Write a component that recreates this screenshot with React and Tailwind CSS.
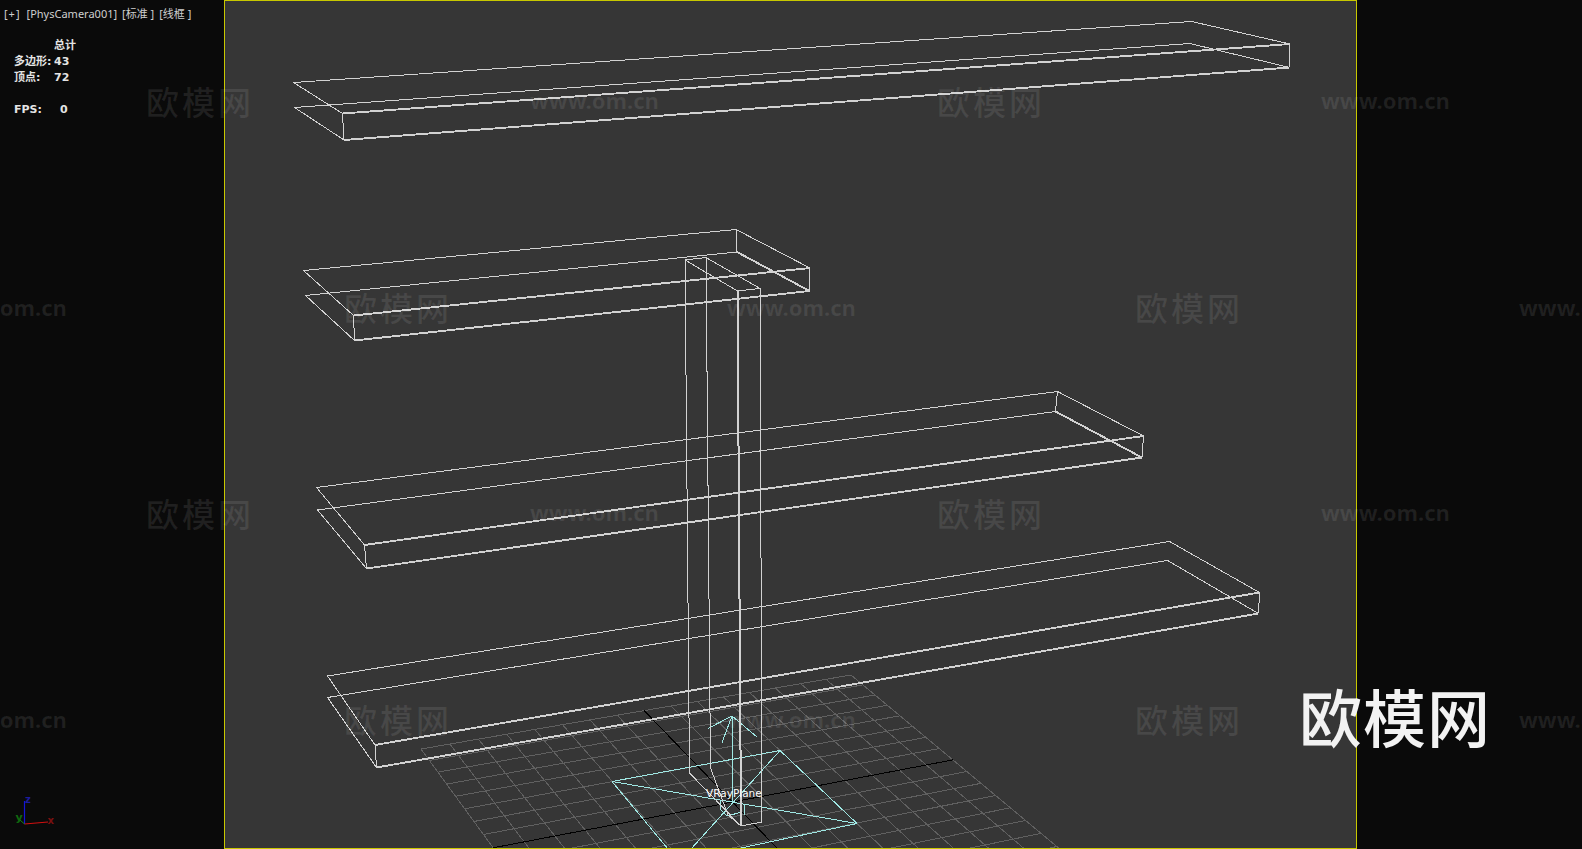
const shelves = [
  { bl: [293.5, 82.5], blb: [294.5, 107.5], fl: [342.5, 113.5], flb: [344, 140], br: [1191.5, 21.5], brb: [1190, 43.5], fr: [1290, 44], frb: [1289.5, 67.5] },
  { bl: [303.5, 270.5], blb: [305.5, 295.5], fl: [353.5, 315.5], flb: [354.5, 340.5], br: [736, 229.5], brb: [737, 252], fr: [810, 268], frb: [809.5, 291], backPost: true },
  { bl: [316.5, 487.5], blb: [317.5, 510], fl: [364.5, 545], flb: [366.5, 568.5], br: [1057.5, 391.5], brb: [1055.5, 411.5], fr: [1143.5, 436], frb: [1142, 457.5], backPost: true },
  { bl: [327.5, 676], blb: [327.5, 697.5], fl: [375, 745], flb: [376.5, 767.5], br: [1169.5, 541.5], brb: [1167.5, 560.5], fr: [1259.5, 592.5], frb: [1258.5, 613.5] },
]

const watermarks = [
  { text: '欧模网', cls: 'left-[146px] top-[86px] text-[33px] font-medium tracking-[3px]' },
  { text: 'www.om.cn', cls: 'left-[530px] top-[89px] text-[22px] font-bold' },
  { text: '欧模网', cls: 'left-[937px] top-[86px] text-[33px] font-medium tracking-[3px]' },
  { text: 'www.om.cn', cls: 'left-[1321px] top-[89px] text-[22px] font-bold' },
  { text: 'www.om.cn', cls: 'left-[-62px] top-[296px] text-[22px] font-bold' },
  { text: '欧模网', cls: 'left-[344px] top-[292px] text-[33px] font-medium tracking-[3px]' },
  { text: 'www.om.cn', cls: 'left-[727px] top-[296px] text-[22px] font-bold' },
  { text: '欧模网', cls: 'left-[1135px] top-[292px] text-[33px] font-medium tracking-[3px]' },
  { text: 'www.om.cn', cls: 'left-[1519px] top-[296px] text-[22px] font-bold' },
  { text: '欧模网', cls: 'left-[146px] top-[498px] text-[33px] font-medium tracking-[3px]' },
  { text: 'www.om.cn', cls: 'left-[530px] top-[501px] text-[22px] font-bold' },
  { text: '欧模网', cls: 'left-[937px] top-[498px] text-[33px] font-medium tracking-[3px]' },
  { text: 'www.om.cn', cls: 'left-[1321px] top-[501px] text-[22px] font-bold' },
  { text: 'www.om.cn', cls: 'left-[-62px] top-[708px] text-[22px] font-bold' },
  { text: '欧模网', cls: 'left-[344px] top-[704px] text-[33px] font-medium tracking-[3px]' },
  { text: 'www.om.cn', cls: 'left-[727px] top-[708px] text-[22px] font-bold' },
  { text: '欧模网', cls: 'left-[1135px] top-[704px] text-[33px] font-medium tracking-[3px]' },
  { text: 'www.om.cn', cls: 'left-[1519px] top-[708px] text-[22px] font-bold' },
]

// perspective mapping of the unit square on to the home grid
const gridQuad = [[421, 749], [851, 675], [1073, 860], [579.5, 966]]

function makeProjector([[x0, y0], [x1, y1], [x2, y2], [x3, y3]]) {
  const dx1 = x1 - x2, dx2 = x3 - x2, dx3 = x0 - x1 + x2 - x3
  const dy1 = y1 - y2, dy2 = y3 - y2, dy3 = y0 - y1 + y2 - y3
  const det = dx1 * dy2 - dx2 * dy1
  const g = (dx3 * dy2 - dx2 * dy3) / det
  const h = (dx1 * dy3 - dx3 * dy1) / det
  const a = x1 - x0 + g * x1, b = x3 - x0 + h * x3
  const d = y1 - y0 + g * y1, e = y3 - y0 + h * y3
  return (u, v) => {
    const w = g * u + h * v + 1
    return [(a * u + b * v + x0) / w, (d * u + e * v + y0) / w]
  }
}

function Line({ a, b, color = '#d2d2d2', width = 1 }) {
  return <line x1={a[0]} y1={a[1]} x2={b[0]} y2={b[1]} stroke={color} strokeWidth={width} />
}

function Grid() {
  const project = makeProjector(gridQuad)
  const cells = 16
  const lines = []
  for (let i = 0; i <= cells; i++) {
    const t = i / cells
    if (i === cells / 2) continue
    lines.push(<Line key={`u${i}`} a={project(t, 0)} b={project(t, 1)} color="#606060" />)
    lines.push(<Line key={`v${i}`} a={project(0, t)} b={project(1, t)} color="#606060" />)
  }
  return (
    <g>
      {lines}
      <Line a={project(0.5, 0)} b={project(0.5, 1)} color="#000000" />
      <Line a={project(0, 0.5)} b={project(1, 0.5)} color="#000000" />
    </g>
  )
}

function Shelf({ bl, blb, fl, flb, br, brb, fr, frb, backPost }) {
  return (
    <g>
      <Line a={bl} b={br} />
      <Line a={br} b={fr} />
      <Line a={bl} b={fl} />
      <Line a={blb} b={brb} />
      <Line a={brb} b={frb} width={backPost ? 1.9 : 1} />
      <Line a={blb} b={flb} />
      <Line a={fl} b={flb} />
      <Line a={fr} b={frb} />
      {backPost && <Line a={br} b={brb} />}
      {/* front edges read heavier in the viewport */}
      <Line a={fl} b={fr} width={1.9} />
      <Line a={flb} b={frb} width={1.9} />
    </g>
  )
}

function VRayPlane() {
  const cyan = '#9fe8e4'
  return (
    <g>
      <Line a={[612, 781.5]} b={[780, 750.5]} color={cyan} />
      <Line a={[780, 750.5]} b={[857, 823.5]} color={cyan} />
      <Line a={[857, 823.5]} b={[722, 852]} color={cyan} />
      <Line a={[612, 781.5]} b={[668, 849]} color={cyan} />
      <Line a={[612, 781.5]} b={[857, 823.5]} color={cyan} />
      <Line a={[780, 750.5]} b={[691, 849]} color={cyan} />
      {/* normal arrow */}
      <Line a={[732, 716]} b={[732, 802]} color={cyan} />
      <Line a={[732, 716]} b={[708, 728.5]} color={cyan} />
      <Line a={[732, 716]} b={[722, 742.5]} color={cyan} />
      <Line a={[732, 716]} b={[757, 737]} color={cyan} />
      {/* little pivot box */}
      <Line a={[720, 801]} b={[720, 809]} color={cyan} />
      <Line a={[720, 809]} b={[727, 816]} color={cyan} />
      <Line a={[727, 816]} b={[742, 812]} color={cyan} />
      <Line a={[744, 804]} b={[744, 815]} color={cyan} />
    </g>
  )
}

function Column() {
  return (
    <g>
      <polygon points="685,260 706,257.5 760,288.5 737.5,291" fill="none" stroke="#d2d2d2" />
      <polyline points="685,260 689.5,773 741,826" fill="none" stroke="#d2d2d2" />
      <polyline points="706,257.5 710.5,768 728,815 741,826" fill="none" stroke="#d2d2d2" />
      <Line a={[737.5, 291]} b={[741, 826]} width={2} />
      <Line a={[760, 288.5]} b={[762, 822]} />
      <Line a={[741, 826]} b={[762, 822]} />
    </g>
  )
}

function StatRow({ label, value, valueCls = '' }) {
  return (
    <div className="flex h-4 items-center">
      <span className="w-10">{label}</span>
      <span className={valueCls}>{value}</span>
    </div>
  )
}

function Tripod() {
  return (
    <svg width="60" height="40" viewBox="0 0 60 40" className="block mb-[17px]">
      <line x1="24.5" y1="32" x2="24.5" y2="9" stroke="#1414d8" strokeWidth="1.2" />
      <line x1="24.5" y1="32" x2="48" y2="30" stroke="#d01010" strokeWidth="1.2" />
      <line x1="24.5" y1="32" x2="20" y2="28" stroke="#108a10" strokeWidth="1" />
      <text x="25" y="11" fontSize="10" fontWeight="700" fill="#1c1c9c" fontFamily="DejaVu Sans, sans-serif">z</text>
      <text x="15.5" y="29" fontSize="11" fontWeight="700" fill="#0f6a0f" fontFamily="DejaVu Sans, sans-serif">y</text>
      <text x="47.5" y="32" fontSize="10" fontWeight="700" fill="#7a1010" fontFamily="DejaVu Sans, sans-serif">x</text>
    </svg>
  )
}

export default function App() {
  return (
    <div className="relative flex h-screen w-full overflow-hidden bg-[#0a0a0a] font-['Noto_Sans','Noto_Sans_CJK_SC',sans-serif]">
      {/* Left side of the letterboxed viewport */}
      <div className="flex w-[224px] flex-none flex-col justify-between">
        <div>
          <div className="flex gap-[5px] pl-1 pt-[6px] text-[11px] leading-4 text-[#cfcfcf] whitespace-pre">
            <span className="mr-px tracking-[1px]">[+]</span>
            <span>[PhysCamera001]</span>
            <span>[标准 ]</span>
            <span>[线框 ]</span>
          </div>
          <div className="mt-[17px] pl-[14px] text-[11px] font-bold text-[#e4e4e4] font-['DejaVu_Sans','Noto_Sans_CJK_SC',sans-serif]">
            <div className="flex h-[15px] items-center pl-10">总计</div>
            <StatRow label="多边形:" value="43" />
            <StatRow label="顶点:" value="72" />
            <div className="h-4" />
            <StatRow label="FPS:" value="0" valueCls="ml-[6px]" />
          </div>
        </div>
        <Tripod />
      </div>

      {/* Viewport */}
      <div className="h-full w-[1133px] flex-none border border-[#c8c800] bg-[#363636]">
        <svg viewBox="225 1 1131 847" className="block h-full w-full" shapeRendering="crispEdges">
          <Grid />
          <VRayPlane />
          {shelves.map((s, i) => (
            <Shelf key={i} {...s} />
          ))}
          <Column />
        </svg>
      </div>

      <div className="flex-1" />

      <div className="absolute left-[706px] top-[785px] text-[10.5px] leading-4 text-white font-['DejaVu_Sans',sans-serif]">VRayPlane</div>

      {/* Watermark tiles */}
      {watermarks.map((w, i) => (
        <div key={i} className={`absolute leading-none whitespace-nowrap text-white/[0.09] ${w.cls}`}>
          {w.text}
        </div>
      ))}
      <div className="absolute left-[1299px] top-[678px] text-[63px] font-medium tracking-[1px] leading-[80px] whitespace-nowrap text-[#f2f2f2]">欧模网</div>
    </div>
  )
}
